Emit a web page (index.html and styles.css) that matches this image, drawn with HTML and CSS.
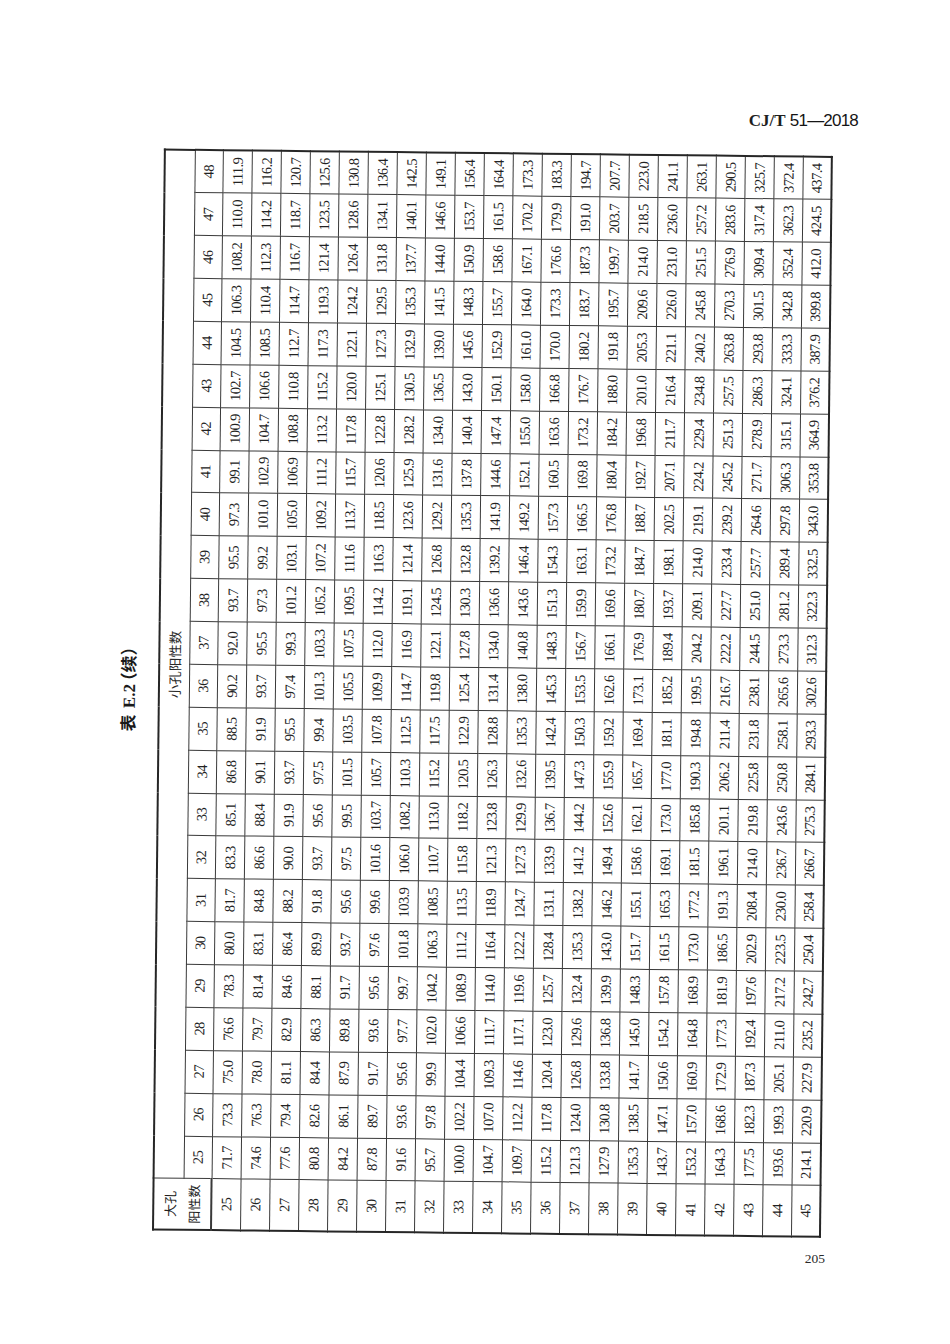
FILE: index.html
```html
<!DOCTYPE html>
<html lang="zh-CN">
<head>
<meta charset="utf-8">
<title>CJ/T 51—2018 表 E.2（续）</title>
<link rel="stylesheet" href="styles.css">
</head>
<body>
<div class="page">
  <header class="running-head"><span class="code">CJ/T</span> <span class="year">51—2018</span></header>

  <div class="sheet">
    <figure class="rotated">
      <figcaption class="caption"><span class="cap-cjk">表</span> <span class="cap-num">E.2</span><span class="cap-cjk">（续）</span></figcaption>
      <table class="mpn">
        <colgroup><col class="col-head"><col span="24"></colgroup>
        <thead>
          <tr class="band">
            <th rowspan="2" class="corner">大孔<br>阳性数</th>
            <th colspan="24" class="band-title">小孔阳性数</th>
          </tr>
          <tr class="nums">
            <th>25</th><th>26</th><th>27</th><th>28</th><th>29</th><th>30</th><th>31</th><th>32</th><th>33</th><th>34</th><th>35</th><th>36</th><th>37</th><th>38</th><th>39</th><th>40</th><th>41</th><th>42</th><th>43</th><th>44</th><th>45</th><th>46</th><th>47</th><th>48</th>
          </tr>
        </thead>
        <tbody>
          <tr><th>25</th><td>71.7</td><td>73.3</td><td>75.0</td><td>76.6</td><td>78.3</td><td>80.0</td><td>81.7</td><td>83.3</td><td>85.1</td><td>86.8</td><td>88.5</td><td>90.2</td><td>92.0</td><td>93.7</td><td>95.5</td><td>97.3</td><td>99.1</td><td>100.9</td><td>102.7</td><td>104.5</td><td>106.3</td><td>108.2</td><td>110.0</td><td>111.9</td></tr>
          <tr><th>26</th><td>74.6</td><td>76.3</td><td>78.0</td><td>79.7</td><td>81.4</td><td>83.1</td><td>84.8</td><td>86.6</td><td>88.4</td><td>90.1</td><td>91.9</td><td>93.7</td><td>95.5</td><td>97.3</td><td>99.2</td><td>101.0</td><td>102.9</td><td>104.7</td><td>106.6</td><td>108.5</td><td>110.4</td><td>112.3</td><td>114.2</td><td>116.2</td></tr>
          <tr><th>27</th><td>77.6</td><td>79.4</td><td>81.1</td><td>82.9</td><td>84.6</td><td>86.4</td><td>88.2</td><td>90.0</td><td>91.9</td><td>93.7</td><td>95.5</td><td>97.4</td><td>99.3</td><td>101.2</td><td>103.1</td><td>105.0</td><td>106.9</td><td>108.8</td><td>110.8</td><td>112.7</td><td>114.7</td><td>116.7</td><td>118.7</td><td>120.7</td></tr>
          <tr><th>28</th><td>80.8</td><td>82.6</td><td>84.4</td><td>86.3</td><td>88.1</td><td>89.9</td><td>91.8</td><td>93.7</td><td>95.6</td><td>97.5</td><td>99.4</td><td>101.3</td><td>103.3</td><td>105.2</td><td>107.2</td><td>109.2</td><td>111.2</td><td>113.2</td><td>115.2</td><td>117.3</td><td>119.3</td><td>121.4</td><td>123.5</td><td>125.6</td></tr>
          <tr><th>29</th><td>84.2</td><td>86.1</td><td>87.9</td><td>89.8</td><td>91.7</td><td>93.7</td><td>95.6</td><td>97.5</td><td>99.5</td><td>101.5</td><td>103.5</td><td>105.5</td><td>107.5</td><td>109.5</td><td>111.6</td><td>113.7</td><td>115.7</td><td>117.8</td><td>120.0</td><td>122.1</td><td>124.2</td><td>126.4</td><td>128.6</td><td>130.8</td></tr>
          <tr><th>30</th><td>87.8</td><td>89.7</td><td>91.7</td><td>93.6</td><td>95.6</td><td>97.6</td><td>99.6</td><td>101.6</td><td>103.7</td><td>105.7</td><td>107.8</td><td>109.9</td><td>112.0</td><td>114.2</td><td>116.3</td><td>118.5</td><td>120.6</td><td>122.8</td><td>125.1</td><td>127.3</td><td>129.5</td><td>131.8</td><td>134.1</td><td>136.4</td></tr>
          <tr><th>31</th><td>91.6</td><td>93.6</td><td>95.6</td><td>97.7</td><td>99.7</td><td>101.8</td><td>103.9</td><td>106.0</td><td>108.2</td><td>110.3</td><td>112.5</td><td>114.7</td><td>116.9</td><td>119.1</td><td>121.4</td><td>123.6</td><td>125.9</td><td>128.2</td><td>130.5</td><td>132.9</td><td>135.3</td><td>137.7</td><td>140.1</td><td>142.5</td></tr>
          <tr><th>32</th><td>95.7</td><td>97.8</td><td>99.9</td><td>102.0</td><td>104.2</td><td>106.3</td><td>108.5</td><td>110.7</td><td>113.0</td><td>115.2</td><td>117.5</td><td>119.8</td><td>122.1</td><td>124.5</td><td>126.8</td><td>129.2</td><td>131.6</td><td>134.0</td><td>136.5</td><td>139.0</td><td>141.5</td><td>144.0</td><td>146.6</td><td>149.1</td></tr>
          <tr><th>33</th><td>100.0</td><td>102.2</td><td>104.4</td><td>106.6</td><td>108.9</td><td>111.2</td><td>113.5</td><td>115.8</td><td>118.2</td><td>120.5</td><td>122.9</td><td>125.4</td><td>127.8</td><td>130.3</td><td>132.8</td><td>135.3</td><td>137.8</td><td>140.4</td><td>143.0</td><td>145.6</td><td>148.3</td><td>150.9</td><td>153.7</td><td>156.4</td></tr>
          <tr><th>34</th><td>104.7</td><td>107.0</td><td>109.3</td><td>111.7</td><td>114.0</td><td>116.4</td><td>118.9</td><td>121.3</td><td>123.8</td><td>126.3</td><td>128.8</td><td>131.4</td><td>134.0</td><td>136.6</td><td>139.2</td><td>141.9</td><td>144.6</td><td>147.4</td><td>150.1</td><td>152.9</td><td>155.7</td><td>158.6</td><td>161.5</td><td>164.4</td></tr>
          <tr><th>35</th><td>109.7</td><td>112.2</td><td>114.6</td><td>117.1</td><td>119.6</td><td>122.2</td><td>124.7</td><td>127.3</td><td>129.9</td><td>132.6</td><td>135.3</td><td>138.0</td><td>140.8</td><td>143.6</td><td>146.4</td><td>149.2</td><td>152.1</td><td>155.0</td><td>158.0</td><td>161.0</td><td>164.0</td><td>167.1</td><td>170.2</td><td>173.3</td></tr>
          <tr><th>36</th><td>115.2</td><td>117.8</td><td>120.4</td><td>123.0</td><td>125.7</td><td>128.4</td><td>131.1</td><td>133.9</td><td>136.7</td><td>139.5</td><td>142.4</td><td>145.3</td><td>148.3</td><td>151.3</td><td>154.3</td><td>157.3</td><td>160.5</td><td>163.6</td><td>166.8</td><td>170.0</td><td>173.3</td><td>176.6</td><td>179.9</td><td>183.3</td></tr>
          <tr><th>37</th><td>121.3</td><td>124.0</td><td>126.8</td><td>129.6</td><td>132.4</td><td>135.3</td><td>138.2</td><td>141.2</td><td>144.2</td><td>147.3</td><td>150.3</td><td>153.5</td><td>156.7</td><td>159.9</td><td>163.1</td><td>166.5</td><td>169.8</td><td>173.2</td><td>176.7</td><td>180.2</td><td>183.7</td><td>187.3</td><td>191.0</td><td>194.7</td></tr>
          <tr><th>38</th><td>127.9</td><td>130.8</td><td>133.8</td><td>136.8</td><td>139.9</td><td>143.0</td><td>146.2</td><td>149.4</td><td>152.6</td><td>155.9</td><td>159.2</td><td>162.6</td><td>166.1</td><td>169.6</td><td>173.2</td><td>176.8</td><td>180.4</td><td>184.2</td><td>188.0</td><td>191.8</td><td>195.7</td><td>199.7</td><td>203.7</td><td>207.7</td></tr>
          <tr><th>39</th><td>135.3</td><td>138.5</td><td>141.7</td><td>145.0</td><td>148.3</td><td>151.7</td><td>155.1</td><td>158.6</td><td>162.1</td><td>165.7</td><td>169.4</td><td>173.1</td><td>176.9</td><td>180.7</td><td>184.7</td><td>188.7</td><td>192.7</td><td>196.8</td><td>201.0</td><td>205.3</td><td>209.6</td><td>214.0</td><td>218.5</td><td>223.0</td></tr>
          <tr><th>40</th><td>143.7</td><td>147.1</td><td>150.6</td><td>154.2</td><td>157.8</td><td>161.5</td><td>165.3</td><td>169.1</td><td>173.0</td><td>177.0</td><td>181.1</td><td>185.2</td><td>189.4</td><td>193.7</td><td>198.1</td><td>202.5</td><td>207.1</td><td>211.7</td><td>216.4</td><td>221.1</td><td>226.0</td><td>231.0</td><td>236.0</td><td>241.1</td></tr>
          <tr><th>41</th><td>153.2</td><td>157.0</td><td>160.9</td><td>164.8</td><td>168.9</td><td>173.0</td><td>177.2</td><td>181.5</td><td>185.8</td><td>190.3</td><td>194.8</td><td>199.5</td><td>204.2</td><td>209.1</td><td>214.0</td><td>219.1</td><td>224.2</td><td>229.4</td><td>234.8</td><td>240.2</td><td>245.8</td><td>251.5</td><td>257.2</td><td>263.1</td></tr>
          <tr><th>42</th><td>164.3</td><td>168.6</td><td>172.9</td><td>177.3</td><td>181.9</td><td>186.5</td><td>191.3</td><td>196.1</td><td>201.1</td><td>206.2</td><td>211.4</td><td>216.7</td><td>222.2</td><td>227.7</td><td>233.4</td><td>239.2</td><td>245.2</td><td>251.3</td><td>257.5</td><td>263.8</td><td>270.3</td><td>276.9</td><td>283.6</td><td>290.5</td></tr>
          <tr><th>43</th><td>177.5</td><td>182.3</td><td>187.3</td><td>192.4</td><td>197.6</td><td>202.9</td><td>208.4</td><td>214.0</td><td>219.8</td><td>225.8</td><td>231.8</td><td>238.1</td><td>244.5</td><td>251.0</td><td>257.7</td><td>264.6</td><td>271.7</td><td>278.9</td><td>286.3</td><td>293.8</td><td>301.5</td><td>309.4</td><td>317.4</td><td>325.7</td></tr>
          <tr><th>44</th><td>193.6</td><td>199.3</td><td>205.1</td><td>211.0</td><td>217.2</td><td>223.5</td><td>230.0</td><td>236.7</td><td>243.6</td><td>250.8</td><td>258.1</td><td>265.6</td><td>273.3</td><td>281.2</td><td>289.4</td><td>297.8</td><td>306.3</td><td>315.1</td><td>324.1</td><td>333.3</td><td>342.8</td><td>352.4</td><td>362.3</td><td>372.4</td></tr>
          <tr><th>45</th><td>214.1</td><td>220.9</td><td>227.9</td><td>235.2</td><td>242.7</td><td>250.4</td><td>258.4</td><td>266.7</td><td>275.3</td><td>284.1</td><td>293.3</td><td>302.6</td><td>312.3</td><td>322.3</td><td>332.5</td><td>343.0</td><td>353.8</td><td>364.9</td><td>376.2</td><td>387.9</td><td>399.8</td><td>412.0</td><td>424.5</td><td>437.4</td></tr>
        </tbody>
      </table>
    </figure>
  </div>

  <footer class="folio">205</footer>
</div>
</body>
</html>
```

FILE: styles.css
```css
html, body {
  margin: 0;
  padding: 0;
  background: #ffffff;
}

.page {
  width: 950px;
  height: 1344px;
  box-sizing: border-box;
  padding: 111px 92px 0 110px;
  font-family: "Liberation Serif", "Noto Sans CJK SC", serif;
  color: #1f1f1f;
  overflow: hidden;
}

/* running head: standard number */
.running-head {
  height: 20px;
  line-height: 20px;
  margin: 0 0 17px;
  text-align: right;
  font-size: 17px;
  white-space: nowrap;
}
.running-head .code {
  font-family: "Liberation Serif", serif;
  font-weight: bold;
}
.running-head .year {
  font-family: "Liberation Sans", sans-serif;
  font-size: 17px;
  letter-spacing: -0.8px;
  color: #151515;
}

/* area holding the table that is printed sideways */
.sheet {
  width: 724px;
  height: 1092px;
}

.rotated {
  margin: 0;
  width: 1082px;
  transform-origin: 0 0;
  transform: translate(0, 1082px) rotate(-89.37deg);
}

.caption {
  text-align: center;
  line-height: 24px;
  padding-bottom: 16px;
  font-size: 17px;
  font-weight: bold;
  color: #1a1a1a;
}
.caption .cap-cjk {
  font-family: "Noto Sans CJK SC", sans-serif;
  font-feature-settings: "halt";
}
.caption .cap-num {
  font-family: "Liberation Serif", serif;
  margin: 0 3px 0 2px;
}

/* the MPN table */
.mpn {
  width: 1082px;
  table-layout: fixed;
  border-collapse: collapse;
  border: 2px solid #262626;
  font-family: "Liberation Serif", serif;
  font-size: 14.5px;
  letter-spacing: -0.6px;
  color: #222;
}
.mpn .col-head {
  width: 51px;
}
.mpn th,
.mpn td {
  padding: 0;
  border: 1px solid #3a3a3a;
  text-align: center;
  vertical-align: middle;
  font-weight: normal;
  line-height: 16px;
  white-space: nowrap;
  overflow: hidden;
}

.mpn .band {
  height: 30px;
}
.mpn .nums {
  height: 28px;
}
.mpn tbody tr {
  height: 29px;
}

.mpn .band-title {
  font-family: "Noto Sans CJK SC", sans-serif;
  font-size: 13.5px;
  letter-spacing: 0;
  color: #2a2a2a;
}
.mpn .corner {
  font-family: "Noto Sans CJK SC", sans-serif;
  font-size: 13px;
  letter-spacing: 0;
  line-height: 24px;
  color: #1f1f1f;
  border-right-width: 1.5px;
  border-bottom-width: 2px;
}
.mpn .nums th {
  border-bottom-width: 1.5px;
}
.mpn tbody th {
  border-right-width: 1.5px;
}

/* folio */
.folio {
  margin-top: 11px;
  line-height: 16px;
  font-size: 13.5px;
  text-align: right;
  padding-right: 33px;
  color: #2a2a2a;
}
```
